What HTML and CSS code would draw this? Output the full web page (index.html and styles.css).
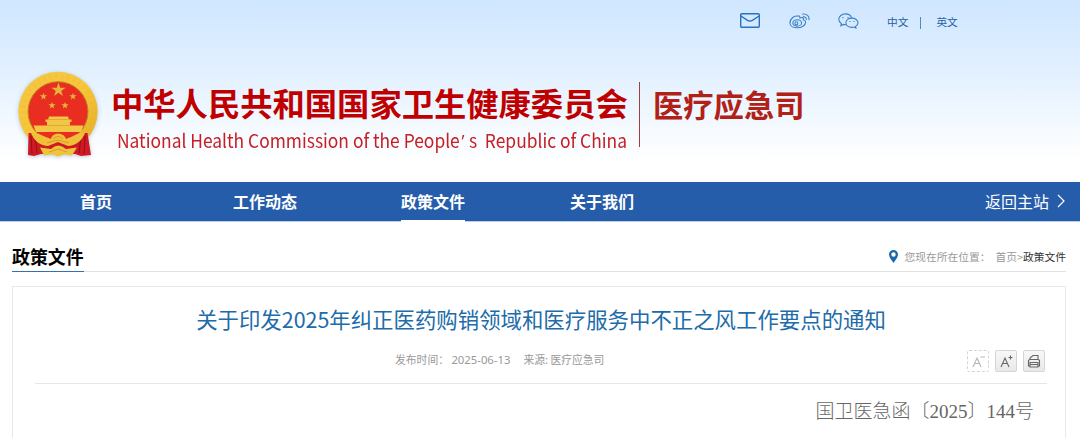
FILE: index.html
```
<!DOCTYPE html>
<html lang="zh-CN">
<head>
    <meta charset="UTF-8">
    <meta name="viewport" content="width=device-width, initial-scale=1.0">
    <title>政策文件</title>
    <link rel="stylesheet" href="styles.css">
</head>
<body>
    <header class="header">
        <div class="top-links">
            <svg class="icon-mail" width="20" height="15" viewBox="0 0 20 15"><rect x=".7" y=".7" width="18.6" height="13.6" rx="1"/><path d="M1 3 7.500 7.300Q10 8.700 12.500 7.300L19 3"/></svg>
            <svg class="icon-weibo" width="21" height="16" viewBox="0 0 21 16">
                <path d="M8 3.200C5.400 2.200.9 6.100.9 9.700.9 13 4.400 14.800 8.200 14.800c4.300 0 8.400-2.500 8.400-5.500 0-1.500-1.100-2.200-2.300-2.600.6-1.700-.3-2.800-3.400-1.700C11.100 3 9.700 2.500 8 3.200z"/>
                <ellipse cx="8.200" cy="9.900" rx="4.400" ry="3.200"/><circle cx="7.400" cy="10.300" r="1.500"/>
                <path d="M13.200 1.200C17.500.2 21 3.300 19.800 7.100M13.800 3.800c2.200-.4 3.900.9 3.400 3"/>
            </svg>
            <svg class="icon-wechat" width="21" height="16" viewBox="0 0 21 16">
                <path d="M13.600 5.100C13 2.600 10.500.9 7.500.9 3.700.9.800 3.300.800 6.300c0 1.800 1 3.200 2.500 4.200l-.4 2.200 2.400-1.300c.9.200 1.700.3 2.600.2"/>
                <path d="M13.900 5.100c-3.300 0-6 2-6 4.700s2.700 4.600 6 4.600c.7 0 1.400-.1 2-.3l2 1-.4-1.700c1.500-.8 2.500-2.100 2.500-3.600 0-2.700-2.800-4.700-6.100-4.700z"/>
                <path d="M5 4v1.200M10 4v1.200M12 8v1M16 8v1"/>
            </svg>
            <a class="lang-cn">中文</a>
            <span class="lang-line"></span>
            <a class="lang-en">英文</a>
        </div>
        <div class="brand">
            <svg class="emblem" width="88" height="94" viewBox="0 0 88 94">
                <defs>
                    <linearGradient id="gold" x1="0" y1="0" x2="1" y2="1"><stop offset="0" stop-color="#f5c644"/><stop offset=".5" stop-color="#f6c63a"/><stop offset="1" stop-color="#e3ab28"/></linearGradient>
                    <path id="star" d="M0-1 .225-.309.951-.309.363.118.588.809 0 .382-.588.809-.363.118-.951-.309-.225-.309z"/>
                </defs>
                <ellipse cx="44" cy="43.500" rx="39.700" ry="39.800" fill="url(#gold)"/>
                <ellipse cx="44" cy="43.500" rx="35" ry="35" fill="none" stroke="#e1a62b" stroke-width="5" stroke-dasharray="2 4" opacity=".15"/>
                <circle cx="44" cy="43.700" r="30" fill="#e92d20" stroke="#bd8620" stroke-width="1"/>
                <g fill="#e5b63c">
                    <use href="#star" transform="translate(44.500 22) scale(7.500)"/>
                    <use href="#star" transform="translate(29.500 28.500) scale(3.800)"/>
                    <use href="#star" transform="translate(59 28.500) scale(3.800)"/>
                    <use href="#star" transform="translate(38 37.500) scale(3.800)"/>
                    <use href="#star" transform="translate(51 37.500) scale(3.800)"/>
                </g>
                <path d="M35 48.500h19l1 3h2.500v2.500H56v3.500h13.500L67 64H22l-2.500-6.500H33V54h-1.500v-2.500H34z" fill="#f3c646"/>
                <path d="M34 51.500h21M33 57.500h23" stroke="#d9a435" stroke-width=".8"/>
                <path d="M14.500 65h6l10 7h27l10-7h6l3.500 22-10 1-6-2H27l-7 2-6-1z" fill="#cf1923"/>
                <path d="M17 68l1 18M21 69l2 16M71 68l-1 18M67 69l-2 16" stroke="#950f19" stroke-width="1"/>
                <path d="M17 65c7-1 13 4 20 6 1-7 13-7 15 0 7-2 12-7 19-6-3 8-10 13-17 13l-10-4-10 4c-7 0-14-5-17-13z" fill="#f1c03a"/>
                <path d="M26 79.500l11 1.500q7-7 15 0l11-1.500-5 8-8-1-6 2-6-2-8 1z" fill="#f0c33c"/>
                <path d="M39 71q5-5 10 0M33 75l11-3 11 3M35 84l9-3 9 3" stroke="#cc9426" stroke-width=".8" fill="none"/>
            </svg>
            <div class="brand-name">
                <div class="name-cn">中华人民共和国国家卫生健康委员会</div>
                <div class="name-en">National Health Commission of the People<span class="quote">’</span>s&nbsp; Republic of China</div>
            </div>
            <div class="department">医疗应急司</div>
        </div>
    </header>

    <nav class="nav">
        <a class="nav-home">首页</a>
        <a class="nav-work">工作动态</a>
        <a class="nav-policy active">政策文件</a>
        <a class="nav-about">关于我们</a>
        <a class="nav-back">返回主站 <svg width="8" height="14" viewBox="0 0 8 14"><path d="M1 1l6 6-6 6"/></svg></a>
    </nav>

    <main class="main">
        <div class="section-head">
            <h2>政策文件</h2>
            <div class="position">
                <svg width="9" height="13" viewBox="0 0 9 13"><path fill-rule="evenodd" d="M4.500 0a4.500 4.500 0 0 0-4.500 4.500C0 7.500 3 10.500 4.500 13 6 10.500 9 7.500 9 4.500A4.500 4.500 0 0 0 4.500 0zm0 2.300a2.200 2.200 0 1 1 0 4.400 2.200 2.200 0 0 1 0-4.400z"/></svg>
                <span class="position-label">您现在所在位置：</span>
                <span>首页&gt;</span><span class="current">政策文件</span>
            </div>
        </div>
        <article class="article">
            <h1>关于印发2025年纠正医药购销领域和医疗服务中不正之风工作要点的通知</h1>
            <div class="info">
                <span class="date">发布时间： <b>2025-06-13</b></span>
                <span class="source">来源: 医疗应急司</span>
                <div class="tools">
                    <button class="smaller" aria-label="缩小字号"><svg width="20" height="20" viewBox="0 0 20 20"><path d="M5 16L9 7 13 16M6.500 12.500h5M12.500 6h4.500"/></svg></button>
                    <button aria-label="放大字号"><svg width="20" height="20" viewBox="0 0 20 20"><path d="M5 16L9 7 13 16M6.500 12.500h5M12.500 6.500h4M14.500 4.500v4"/></svg></button>
                    <button aria-label="打印"><svg width="20" height="20" viewBox="0 0 20 20"><path d="M6 8.500V7l3-2.500h5v4M6 15H4.500V9.500l1-1h9l1 1V15H14M6 11.500h8v4.500H6zM6 13.500h8"/></svg></button>
                </div>
            </div>
            <p class="doc-number">国卫医急函〔2025〕144号</p>
        </article>
    </main>
</body>
</html>
```
FILE: styles.css
```
* {
    box-sizing: border-box;
}
body {
    margin: 0;
    background: #fff;
    font-family: "Noto Sans CJK SC", sans-serif;
}
.header {
    height: 182px;
    background: linear-gradient(#cfe6ff 0, #e3f1ff 75px, #fff 160px);
}
.top-links {
    display: flex;
    align-items: center;
    height: 41px;
    padding-left: 740px;
    font-size: 10.7px;
    color: #2760a5;
}
.top-links svg {
    fill: none;
    stroke: #3b80c6;
    stroke-width: 1.1;
}
.top-links .icon-mail {
    stroke: #2872bf;
    stroke-width: 1.4;
}
.icon-weibo {
    margin-left: 29px;
}
.icon-wechat {
    margin-left: 28px;
}
.lang-cn,
.lang-en {
    margin-top: 2px;
}
.lang-cn {
    margin-left: 28px;
}
.lang-line {
    width: 1px;
    height: 12px;
    margin: 4px 15px 0 12px;
    background: #4d8aca;
}
.brand {
    display: flex;
    padding: 27px 0 0 14px;
}
.emblem {
    filter: drop-shadow(0 1px 2px #7d9dbd80);
}
.brand-name {
    width: 529px;
    height: 65px;
    margin: 14px 0 0 9px;
    border-right: 1px solid #a63d3d;
    white-space: nowrap;
}
.name-cn {
    height: 43px;
    font-size: 32.3px;
    font-weight: 700;
    line-height: 40px;
    color: #c00000;
}
.name-en {
    width: 557px;
    margin-left: 6px;
    font-size: 19px;
    line-height: 29px;
    color: #c51f25;
    /* condensed to end level with the Chinese name */
    transform: scaleX(.916);
    transform-origin: 0 0;
}
.quote {
    display: inline-block;
    width: 10px;
    padding-left: 2px;
    font-family: "Open Sans", sans-serif;
    line-height: 1;
}
.department {
    margin: 15px 0 0 13px;
    font-size: 30.3px;
    font-weight: 700;
    line-height: 42px;
    color: #b22118;
}
.nav {
    display: flex;
    height: 40px;
    padding-left: 80px;
    background: #255dab;
    border-bottom: 1px solid #b9cde5;
    font-size: 16px;
    font-weight: 700;
    line-height: 38px;
    color: #fff;
}
.nav-work {
    margin-left: 121px;
}
.nav-policy {
    margin-left: 104px;
}
.nav-about {
    margin-left: 105px;
}
.nav .active {
    height: 40px;
    border-bottom: 2px solid #fff;
}
.nav-back {
    display: flex;
    align-items: center;
    gap: 8px;
    height: 38px;
    margin: 0 15px 0 auto;
    font-weight: 400;
}
.nav-back svg {
    fill: none;
    stroke: #fff;
    stroke-width: 1.2;
}
.main {
    padding: 20px 14px 0 12px;
}
.section-head {
    display: flex;
    justify-content: space-between;
    height: 30px;
    border-bottom: 1px solid #e2e2e2;
}
.section-head h2 {
    height: 30px;
    margin: 0;
    border-bottom: 1px solid #3270b3;
    font-size: 17.9px;
    line-height: 29px;
    color: #000;
}
.position {
    display: flex;
    align-items: center;
    height: 29px;
    font-size: 10.75px;
    color: #999;
}
.position svg {
    margin-right: 7px;
    fill: #1c67a8;
}
.position-label {
    margin-right: 5px;
}
.current {
    color: #333;
}
.article {
    height: 152px;
    margin-top: 14px;
    padding: 14px 18px 0 22px;
    border: 1px solid #e8e8e8;
    border-bottom: 0;
}
.article h1 {
    margin: 0 0 1px;
    font-size: 21.42px;
    font-weight: 400;
    line-height: 36px;
    text-align: center;
    color: #206ba9;
    white-space: nowrap;
}
.info {
    display: flex;
    align-items: flex-start;
    height: 46px;
    padding-left: 360px;
    border-bottom: 1px solid #e6e6e6;
    font-size: 10.8px;
    line-height: 42px;
    color: #999;
}
.date b {
    font-family: "Noto Sans", sans-serif;
    font-size: 11.3px;
    font-weight: 400;
}
.source {
    margin-left: 13px;
}
.tools {
    display: flex;
    gap: 6px;
    margin: 12px 2px 0 auto;
}
.tools button {
    width: 22px;
    height: 22px;
    padding: 0;
    border: 1px solid #d5d5d5;
    border-radius: 2px;
    background: linear-gradient(#f8f8f8, #e9e9e9);
}
.tools .smaller {
    border-style: dashed;
    background: #fff;
}
.tools svg {
    display: block;
    fill: none;
    stroke: #666;
    stroke-width: 1.1;
}
.tools .smaller svg {
    stroke: #b5b5b5;
}
.doc-number {
    margin: 14px 13px 0 0;
    font-family: "Liberation Serif", "Noto Sans CJK SC", serif;
    font-size: 19px;
    font-weight: 300;
    line-height: 28px;
    text-align: right;
    color: #666;
}
```
